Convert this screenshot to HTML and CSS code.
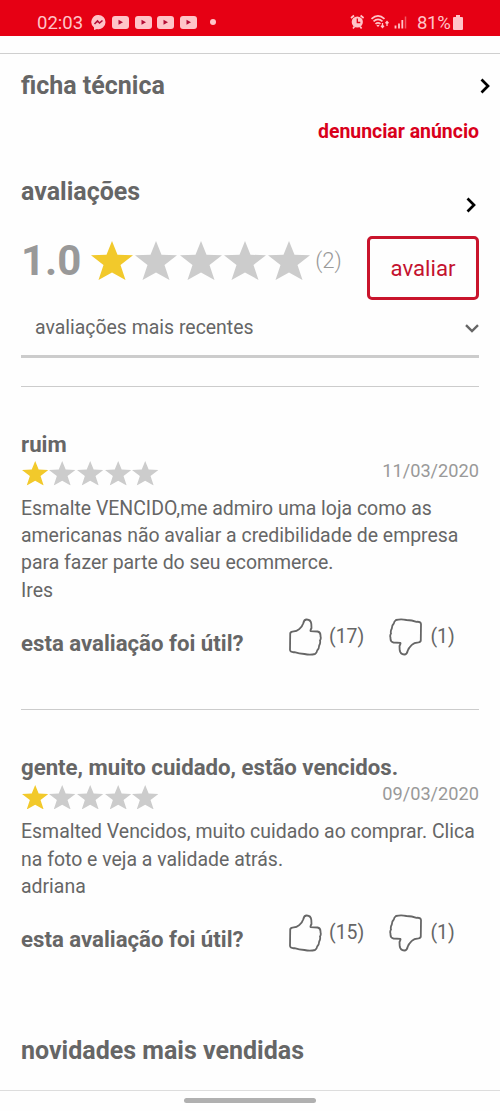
FILE: index.html
```html
<!DOCTYPE html>
<html lang="pt-BR">
<head>
<meta charset="utf-8">
<title>avaliações</title>
<link rel="stylesheet" href="styles.css">
</head>
<body>
<svg class="defs" aria-hidden="true">
  <symbol id="star" viewBox="0 0 42 39"><path d="M21 0l5.500 13.700L42 14.200 29.500 24l5 15L21 31.500 7.500 39l5-15L0 14.200l15.500-.5z"/></symbol>
  <symbol id="thumb" viewBox="0 0 34 38"><path d="M2.200 16.200Q2 14 4.500 13.700Q9 13.400 11.200 11.200C13.500 9 14.500 8 15.300 5.200C15.900 2.200 17 1.400 18.800 1.500C21.500 1.600 23 3.300 23.300 5.800L23.500 10Q22 12.800 22.700 13.100L29.500 13.500Q32.800 14 32.500 18.200Q33.300 20.800 32 22.500Q32.700 25 31.200 27.500Q31 31 29.200 32.500Q29 34.500 27 36Q22 37.200 16.500 36Q11 35.700 6.500 34.200Q2.300 34.500 2 32z"/></symbol>
  <symbol id="play" viewBox="0 0 17 13"><rect width="17" height="13" rx="3" fill="#ffc4c8"/><path d="M6.500 3.800v5l4.500-2.500z" fill="#b40c34"/></symbol>
</svg>
<header class="status">
  <span class="clock">02:03</span>
  <svg class="messenger" viewBox="0 0 15 15"><path d="M7.500 0a7 7 0 0 1 7 7a7 7 0 0 1-8.500 7L3 15v-2.500A7 7 0 0 1 7.500 0z" fill="#ffc4c8"/><path d="M3.500 9l3-3 2 2 3-2.500" fill="none" stroke="#b40c34" stroke-width="1.600"/></svg>
  <svg class="play"><use href="#play"/></svg>
  <svg class="play"><use href="#play"/></svg>
  <svg class="play"><use href="#play"/></svg>
  <svg class="play"><use href="#play"/></svg>
  <i class="dot"></i>
  <svg class="signals" viewBox="0 0 58 16" fill="none" stroke="#ffc4c8">
    <circle cx="7.300" cy="8" r="5.600" fill="#ffc4c8" stroke="none"/>
    <path d="M1 4l3-2.500M13.600 4l-3-2.500M3 14.500l1.500-2M11.600 14.500l-1.500-2" stroke-width="1.700"/>
    <path d="M7.300 4.500V8.500h3" stroke="#e60014" stroke-width="1.300"/>
    <path d="M21.500 4.800q6.500-6 13 0M23.500 7.400q4.500-4 9 0M25.500 9.900q2.500-2.200 5 0M27 12.200q1-1 2 0" stroke-width="1.700"/>
    <path d="M32.500 9v4.500m-1.500-1.700l1.500 1.700 1.500-1.700M37 12V7.500m-1.500 1.700L37 7.500l1.500 1.700" stroke-width="1.300"/>
    <path d="M45.500 14.500v-3M49 14.500V9.500M52.300 14.500V6" stroke-width="1.800"/>
    <path d="M55.500 14.500V2.500" stroke-width="1.500" opacity=".45"/>
  </svg>
  <span class="percent">81%</span>
  <svg class="battery" viewBox="0 0 10 15"><path d="M3 0h4v2h2q1 0 1 1v11q0 1-1 1H1q-1 0-1-1V3q0-1 1-1h2z" fill="#ffc4c8"/></svg>
</header>
<main>
  <section class="row sheet">
    <h2>ficha técnica</h2>
    <svg class="next" viewBox="0 0 10 16"><path d="M1.500 1.500L8 8l-6.500 6.500"/></svg>
  </section>
  <a class="report"><span>denunciar anúncio</span></a>
  <section class="row ratings">
    <h2>avaliações</h2>
    <svg class="next" viewBox="0 0 10 16"><path d="M1.500 1.500L8 8l-6.500 6.500"/></svg>
  </section>
  <section class="summary">
    <strong class="score">1.0</strong>
    <div class="stars large"><svg class="on"><use href="#star"/></svg><svg><use href="#star"/></svg><svg><use href="#star"/></svg><svg><use href="#star"/></svg><svg><use href="#star"/></svg></div>
    <span class="total">(2)</span>
    <button class="rate">avaliar</button>
  </section>
  <div class="select">
    <span>avaliações mais recentes</span>
    <svg class="down" viewBox="0 0 14 9"><path d="M1 1.200l6 5.800 6-5.800"/></svg>
  </div>
  <article class="review">
    <h3>ruim</h3>
    <div class="meta">
      <div class="stars"><svg class="on"><use href="#star"/></svg><svg><use href="#star"/></svg><svg><use href="#star"/></svg><svg><use href="#star"/></svg><svg><use href="#star"/></svg></div>
      <time>11/03/2020</time>
    </div>
    <p>Esmalte VENCIDO,me admiro uma loja como as<br>americanas não avaliar a credibilidade de empresa<br>para fazer parte do seu ecommerce.<br>Ires</p>
    <footer>
      <b>esta avaliação foi útil?</b>
      <svg class="thumb"><use href="#thumb"/></svg><span class="up">(17)</span>
      <svg class="thumb flip"><use href="#thumb"/></svg><span>(1)</span>
    </footer>
  </article>
  <article class="review">
    <h3>gente, muito cuidado, estão vencidos.</h3>
    <div class="meta">
      <div class="stars"><svg class="on"><use href="#star"/></svg><svg><use href="#star"/></svg><svg><use href="#star"/></svg><svg><use href="#star"/></svg><svg><use href="#star"/></svg></div>
      <time>09/03/2020</time>
    </div>
    <p>Esmalted Vencidos, muito cuidado ao comprar. Clica<br>na foto e veja a validade atrás.<br>adriana</p>
    <footer>
      <b>esta avaliação foi útil?</b>
      <svg class="thumb"><use href="#thumb"/></svg><span class="up">(15)</span>
      <svg class="thumb flip"><use href="#thumb"/></svg><span>(1)</span>
    </footer>
  </article>
  <h2 class="news">novidades mais vendidas</h2>
</main>
<nav class="gesture"><i></i></nav>
</body>
</html>
```
FILE: styles.css
```css
* { box-sizing: border-box; }
body {
  margin: 0;
  height: 1111px;
  display: flex;
  flex-direction: column;
  overflow: hidden;
  background: #fefefe;
  color: #666;
  font-family: Roboto, "Liberation Sans", sans-serif;
  font-size: 19.44px;
  line-height: 32px;
}
svg { display: block; flex: none; }
h2, h3, p { margin: 0; }
.defs { position: absolute; width: 0; height: 0; }

.status {
  height: 36px;
  flex: none;
  display: flex;
  align-items: center;
  padding: 10px 37px 0;
  background: #e60014;
  color: #ffc4c8;
  font-size: 18.5px;
}
.status svg { margin-top: -2px; }
.clock { width: 54px; }
.messenger { width: 15px; height: 15px; margin-right: 6px; }
.play { width: 17px; height: 13px; margin-right: 5.6px; }
.dot { width: 6px; height: 6px; margin: -2px 0 0 7.5px; border-radius: 50%; background: #ffc4c8; }
.status .signals { width: 58px; height: 16px; margin-left: auto; }
.percent { width: 36px; margin-left: 9px; letter-spacing: -.3px; }
.battery { width: 10px; height: 15px; }

main { flex: 1; margin-top: 17px; padding: 16px 21px 0; border-top: 1px solid #cfcfcf; }
h2 { font-size: 25px; font-weight: 700; }
h3 { font-size: 22.2px; font-weight: 700; }
.row { display: flex; justify-content: space-between; }
.next { width: 10px; height: 16px; fill: none; stroke: #000; stroke-width: 2.7; }
.sheet .next { margin: 8px -10.500px 0 0; }
.report { display: block; margin-top: 14px; text-align: right; color: #d9001b; font-weight: 700; }
.ratings { margin-top: 28px; }
.ratings .next { margin: 21px 3px 0 0; }

.summary { display: flex; height: 64px; margin-top: 23px; }
.score { width: 70px; font-size: 42px; line-height: 49px; color: #999; }
.stars { display: flex; fill: #ccc; gap: 1.200px; }
.stars svg { width: 26.400px; height: 24.500px; }
.stars .on { fill: #f2c92b; }
.large { gap: 2.300px; margin-top: 5px; }
.large svg { width: 42px; height: 39px; }
.total { margin: 8px 0 0 5px; color: #999; font-size: 22.2px; font-weight: 300; }
.rate {
  width: 112px;
  height: 64px;
  margin-left: auto;
  padding: 0;
  border: 3px solid #c9142c;
  border-radius: 5px;
  background: none;
  color: #c4122f;
  font: 22.2px Roboto, sans-serif;
}
.select {
  display: flex;
  justify-content: space-between;
  height: 58px;
  padding: 12px 0 0 14px;
  border-bottom: 3px solid #ccc;
}
.down { width: 14px; height: 9px; margin-top: 12px; fill: none; stroke: #666; stroke-width: 2.400; }

.review { margin-top: 28px; padding-top: 41px; border-top: 1px solid #ccc; }
.meta { display: flex; justify-content: space-between; height: 35px; }
.meta .stars { margin: 1.200px 0 0 .6px; gap: 1.300px; }
time { font-size: 18.2px; color: #999; line-height: 21px; }
.review p { line-height: 27.200px; white-space: nowrap; }
footer { display: flex; height: 50px; margin-top: 14.200px; }
footer b { width: 267px; margin-top: 9px; font-size: 22.2px; font-weight: 700; }
.thumb { width: 34px; height: 38px; fill: none; stroke: #666; stroke-width: 1.800; }
.flip { transform: rotate(180deg); }
footer span { margin: 3px 0 0 7px; }
.up { width: 60.400px; }
.review + .review { margin-top: 41.400px; }
.news { margin-top: 71px; }
.gesture { display: flex; justify-content: center; height: 21px; padding-top: 7px; border-top: 1px solid #ddd; }
.gesture i { width: 132px; height: 5px; border-radius: 3px; background: #b0b0b0; }
```
